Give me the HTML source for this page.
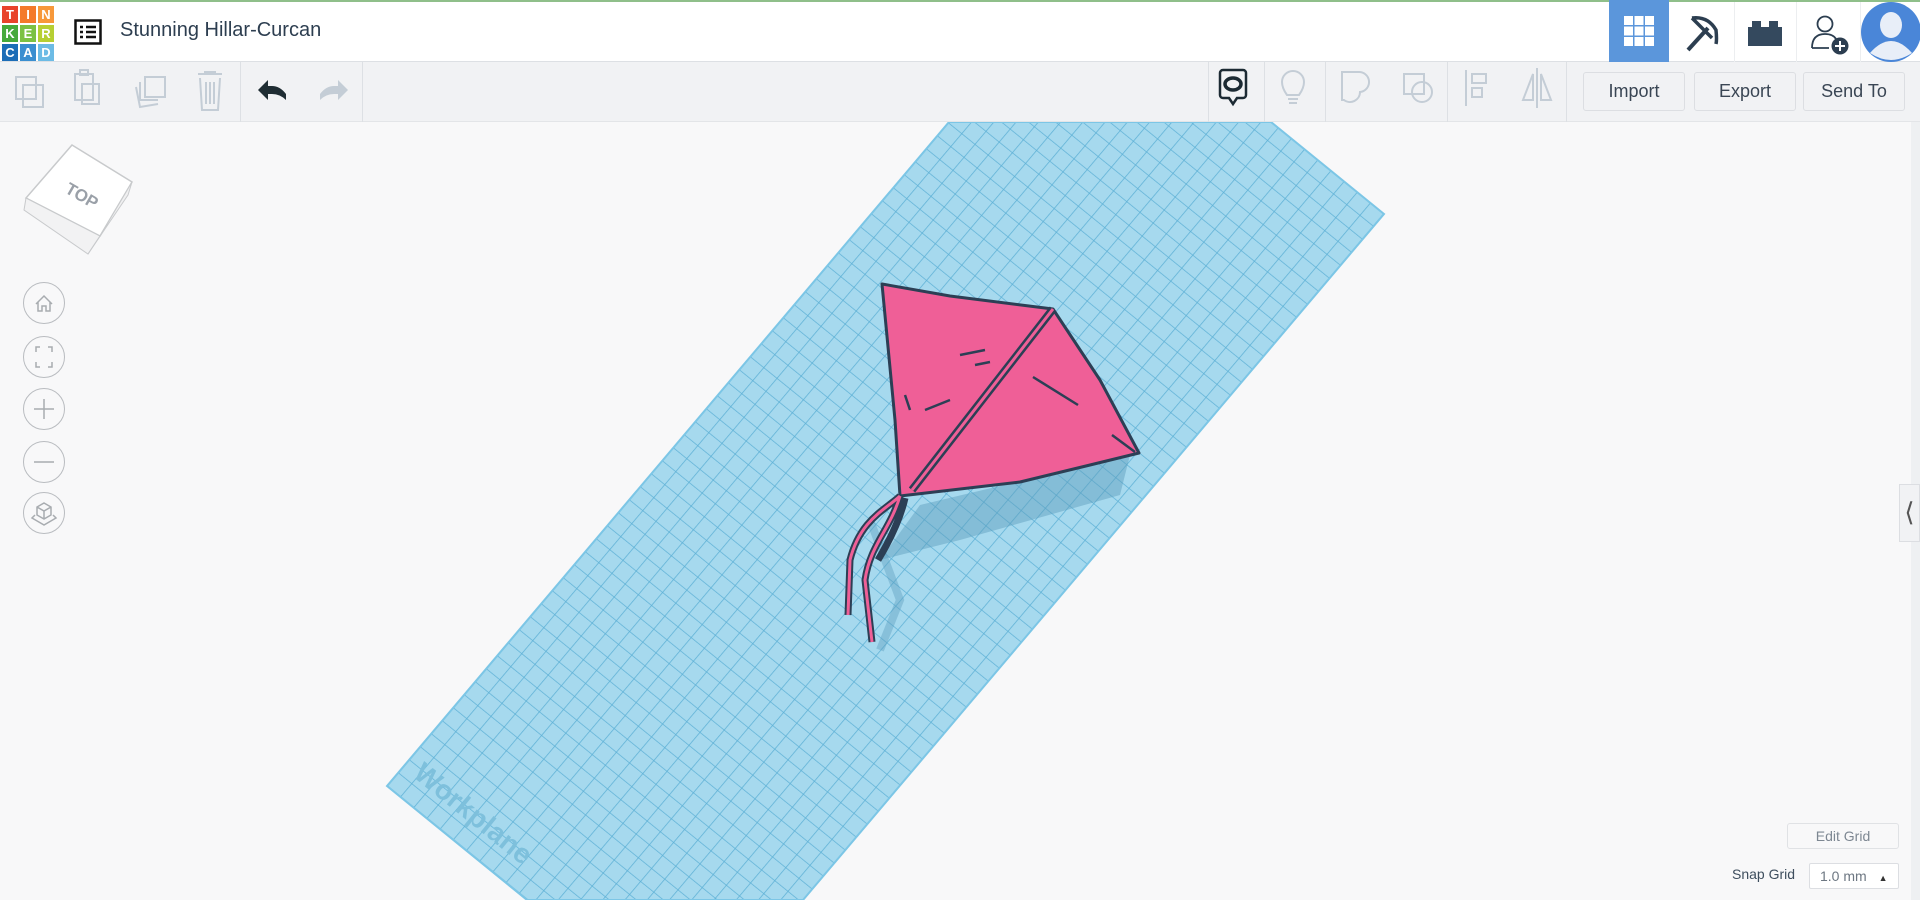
<!DOCTYPE html>
<html><head><meta charset="utf-8"><style>
*{box-sizing:border-box;margin:0;padding:0}
body{width:1920px;height:900px;overflow:hidden;background:#f8f8f9;font-family:"Liberation Sans",sans-serif;position:relative}
.hdr{position:absolute;left:0;top:0;width:1920px;height:62px;background:#fff;border-top:2px solid #8fbf8a;border-bottom:1px solid #dde0e4;box-shadow:0 1px 3px rgba(0,0,0,.08)}
.tb{position:absolute;left:0;top:62px;width:1920px;height:60px;background:#f1f2f4;border-bottom:1px solid #e3e5e8}
.sep{position:absolute;top:62px;width:1px;height:60px;background:#dde0e4}
.btn{position:absolute;top:72px;height:39px;border:1px solid #dcdee2;border-radius:3px;background:#f1f2f4;color:#3a4654;font-size:18px;text-align:center;line-height:37px}
.circ{position:absolute;left:23px;width:42px;height:42px;border:1px solid #b9bcc0;border-radius:50%;background:#f8f8f9}
.logo div{position:absolute;width:16px;height:17px;color:#fff;font-weight:bold;font-size:13px;text-align:center;line-height:17px}
</style></head><body>
<svg style="position:absolute;left:0;top:0" width="1920" height="900">
<defs>
<pattern id="g" patternUnits="userSpaceOnUse" width="10" height="10" patternTransform="matrix(1.32 1.07 1.1 -1.3 387 786)">
<rect width="10" height="10" fill="#a6d9ee"/>
<path d="M0 0H10M0 0V10" stroke="#5fb1d6" stroke-width="0.9" fill="none"/>
</pattern>
</defs>
<polygon points="949,122 1271,122 1384,214 803,900 527,900 387,786" fill="url(#g)" stroke="#7cc6e6" stroke-width="2"/>
<text x="0" y="0" transform="translate(412,776) rotate(39)" font-size="28" font-weight="bold" fill="#7ec0dc" font-family="Liberation Sans">Workplane</text>
<polygon points="920,505 1130,455 1120,495 960,540 880,560" fill="#5a9cbb" opacity="0.45"/>
<path d="M870 520 L900 600 L880 650" stroke="#5a9cbb" stroke-width="8" opacity="0.4" fill="none"/>
<polygon points="882,284 950,296 1053,309 1100,380 1139,453 1090,465 1020,482 900,496 895,420" fill="#ef5f97" stroke="#2c3f55" stroke-width="3" stroke-linejoin="round"/>
<path d="M1053,309 L912,490" stroke="#2c3f55" stroke-width="8"/>
<path d="M1053,309 L912,490" stroke="#ef5f97" stroke-width="3"/>
<path d="M1033,377 L1078,405 M1112,435 L1135,452 M960,355 L985,350 M975,365 L990,362 M905,395 L910,410 M925,410 L950,400" stroke="#2c3f55" stroke-width="2.5"/>
<path d="M900,496 C885,510 860,520 850,560 L848,615 M900,496 C890,530 870,545 865,580 L872,642 M905,498 C900,520 890,540 878,560" stroke="#2c3f55" stroke-width="7" fill="none"/>
<path d="M900,496 C885,510 860,520 850,560 L848,615 M900,496 C890,530 870,545 865,580 L872,642" stroke="#ef5f97" stroke-width="3" fill="none"/>
</svg>
<div class="hdr">
<div class="logo" style="position:absolute;left:2px;top:4px">
<div style="left:0;top:0;background:#e8432b">T</div><div style="left:18px;top:0;background:#f47a2b">I</div><div style="left:36px;top:0;background:#f7983a">N</div>
<div style="left:0;top:19px;background:#47a93b">K</div><div style="left:18px;top:19px;background:#7cc143">E</div><div style="left:36px;top:19px;background:#b6cf33">R</div>
<div style="left:0;top:38px;background:#1c6db7">C</div><div style="left:18px;top:38px;background:#3a8ed0">A</div><div style="left:36px;top:38px;background:#6cbbe5">D</div>
</div>
<svg style="position:absolute;left:74px;top:17px" width="28" height="26"><rect x="1.5" y="1.5" width="25" height="23" fill="none" stroke="#111" stroke-width="2.5"/><path d="M6 8h3M12 8h10M6 13h3M12 13h10M6 18h3M12 18h10" stroke="#111" stroke-width="2.5"/></svg>
<div style="position:absolute;left:120px;top:17px;font-size:20px;color:#2d3e50">Stunning Hillar-Curcan</div>
<div style="position:absolute;left:1609px;top:-2px;width:60px;height:62px;background:#5b96db"></div>
<svg style="position:absolute;left:1624px;top:14px" width="30" height="30"><g fill="#fff"><rect x="0" y="0" width="9" height="9"/><rect x="10.5" y="0" width="9" height="9"/><rect x="21" y="0" width="9" height="9"/><rect x="0" y="10.5" width="9" height="9"/><rect x="10.5" y="10.5" width="9" height="9"/><rect x="21" y="10.5" width="9" height="9"/><rect x="0" y="21" width="9" height="9"/><rect x="10.5" y="21" width="9" height="9"/><rect x="21" y="21" width="9" height="9"/></g></svg>
<div style="position:absolute;left:1734px;top:0;width:1px;height:60px;background:#eceef0"></div>
<div style="position:absolute;left:1796px;top:0;width:1px;height:60px;background:#eceef0"></div>
<div style="position:absolute;left:1860px;top:0;width:1px;height:60px;background:#eceef0"></div>
<svg style="position:absolute;left:1684px;top:12px" width="38" height="38"><path d="M4 36 L24 14" stroke="#2c3e50" stroke-width="4"/><path d="M8 4 Q24 2 32 16 Q33 26 32 30 M8 4 L28 24" stroke="#2c3e50" stroke-width="3.5" fill="none"/></svg>
<svg style="position:absolute;left:1748px;top:18px" width="34" height="26"><path d="M0 7h4V1h9v6h8V1h9v6h4v19H0z" fill="#34495e"/></svg>
<svg style="position:absolute;left:1810px;top:12px" width="40" height="42"><circle cx="15" cy="10" r="7.5" fill="none" stroke="#2c3e50" stroke-width="1.8"/><path d="M2 34 Q2 20 15 20 Q23 20 26 25 M2 34h17" fill="none" stroke="#2c3e50" stroke-width="1.8"/><circle cx="30" cy="32" r="8.5" fill="#2c3e50"/><path d="M30 27v10M25 32h10" stroke="#fff" stroke-width="2"/></svg>
<svg style="position:absolute;left:1860px;top:-1px" width="60" height="62"><circle cx="31" cy="31" r="30" fill="#4a86d8"/><ellipse cx="31" cy="24" rx="11" ry="13" fill="#e8eef8"/><path d="M10 52 Q31 28 52 52 Q31 66 10 52z" fill="#e8eef8"/></svg>
</div>
<div class="tb"></div>
<div class="sep" style="left:240px"></div><div class="sep" style="left:362px"></div>
<div class="sep" style="left:1208px"></div><div class="sep" style="left:1264px"></div><div class="sep" style="left:1325px"></div><div class="sep" style="left:1447px"></div><div class="sep" style="left:1566px"></div>
<svg style="position:absolute;left:0;top:62px" width="1920" height="60" fill="none" stroke="#c4cdd6" stroke-width="2">
<rect x="16" y="15" width="20" height="22"/><rect x="23" y="23" width="20" height="22"/>
<rect x="75" y="12" width="18" height="26"/><rect x="82" y="22" width="17" height="20"/><rect x="80" y="8" width="8" height="5"/>
<rect x="145" y="15" width="20" height="20"/><path d="M140 20v18h18M136 25l4 20l18 -3"/>
<path d="M198 12h24M204 10h12M200 16l2 32h16l2-32M206 20v22M210 20v22M214 20v22"/>
<path d="M320 32 Q326 24 334 24h4v-6l10 10l-10 10v-6h-4q-8 0-14 6z" fill="#c4cdd6" stroke="none"/>
<path d="M286 32 Q280 24 272 24h-4v-6l-10 10l10 10v-6h4q8 0 14 6z" fill="#1f2d33" stroke="none"/>
<path d="M1223 8h20a3 3 0 0 1 3 3v22a3 3 0 0 1-3 3h-6l-4 6l-4-6h-6a3 3 0 0 1-3-3v-22a3 3 0 0 1 3-3z" stroke="#1c2a33" stroke-width="2.5"/>
<ellipse cx="1233" cy="22" rx="8" ry="6" stroke="#1c2a33" stroke-width="3.5"/>
<path d="M1287 33 Q1282 26 1282 20a11 11 0 0 1 22 0q0 6-5 13zM1288 37h10M1289 41h8"/>
<path d="M1342 10h16a10 10 0 0 1 2 20a10 10 0 0 1-16 8h-2z"/>
<rect x="1404" y="12" width="20" height="20"/><circle cx="1422" cy="30" r="10"/>
<path d="M1466 8v36"/><rect x="1472" y="12" width="14" height="9"/><rect x="1472" y="26" width="10" height="9"/>
<path d="M1537 6v40M1533 12l-10 26h10zM1541 12l10 26h-10z"/>
</svg>
<div class="btn" style="left:1583px;width:102px">Import</div>
<div class="btn" style="left:1694px;width:102px">Export</div>
<div class="btn" style="left:1803px;width:102px">Send To</div>
<svg style="position:absolute;left:20px;top:140px" width="115" height="115">
<polygon points="52,5 112,42 80,96 6,58" fill="#fff" stroke="#c8cacc" stroke-width="1.5"/>
<polygon points="6,58 80,96 68,114 4,70" fill="#f2f2f3" stroke="#c8cacc"/>
<polygon points="80,96 112,42 108,55 68,114" fill="#f0f0f1" stroke="#c8cacc"/>
<text transform="translate(44,52) rotate(30)" font-size="17" font-weight="bold" fill="#9aa0a8">TOP</text>
</svg>
<div class="circ" style="top:282px"></div><div class="circ" style="top:336px"></div><div class="circ" style="top:388px"></div><div class="circ" style="top:441px"></div><div class="circ" style="top:492px"></div>
<svg style="position:absolute;left:23px;top:282px" width="42" height="252" fill="none" stroke="#a8acb0" stroke-width="1.5">
<path d="M13 22l8-8l8 8M15 20v9h4v-5h4v5h4v-9"/>
<path d="M13 70v-5h4M25 65h4v5M29 80v5h-4M17 85h-4v-5"/>
<path d="M21 117v20M11 127h20"/>
<path d="M11 180h20"/>
<path d="M21 221l7 4v8l-7 4l-7-4v-8zM14 225l7 4l7-4M21 229v8M12 233l-3 3l12 7l12-7l-3-3"/>
</svg>
<div style="position:absolute;left:1911px;top:122px;width:9px;height:778px;background:#eef0f2"></div>
<div style="position:absolute;left:1899px;top:484px;width:21px;height:58px;background:#f1f2f4;border:1px solid #dcdee2;color:#555;font-size:26px;line-height:54px;text-align:center">&#10216;</div>
<div style="position:absolute;left:1787px;top:823px;width:112px;height:26px;border:1px solid #e0e2e5;border-radius:3px;background:#f8f8f9;color:#7d8792;font-size:14px;text-align:center;line-height:24px">Edit Grid</div>
<div style="position:absolute;left:1732px;top:866px;color:#3e4e5e;font-size:14px">Snap Grid</div>
<div style="position:absolute;left:1809px;top:863px;width:90px;height:26px;border:1px solid #dcdee2;border-radius:2px;background:#fff;color:#6d7782;font-size:14px;line-height:24px;padding-left:10px">1.0 mm <span style="font-size:9px;color:#333;margin-left:8px">&#9650;</span></div>
</body></html>
